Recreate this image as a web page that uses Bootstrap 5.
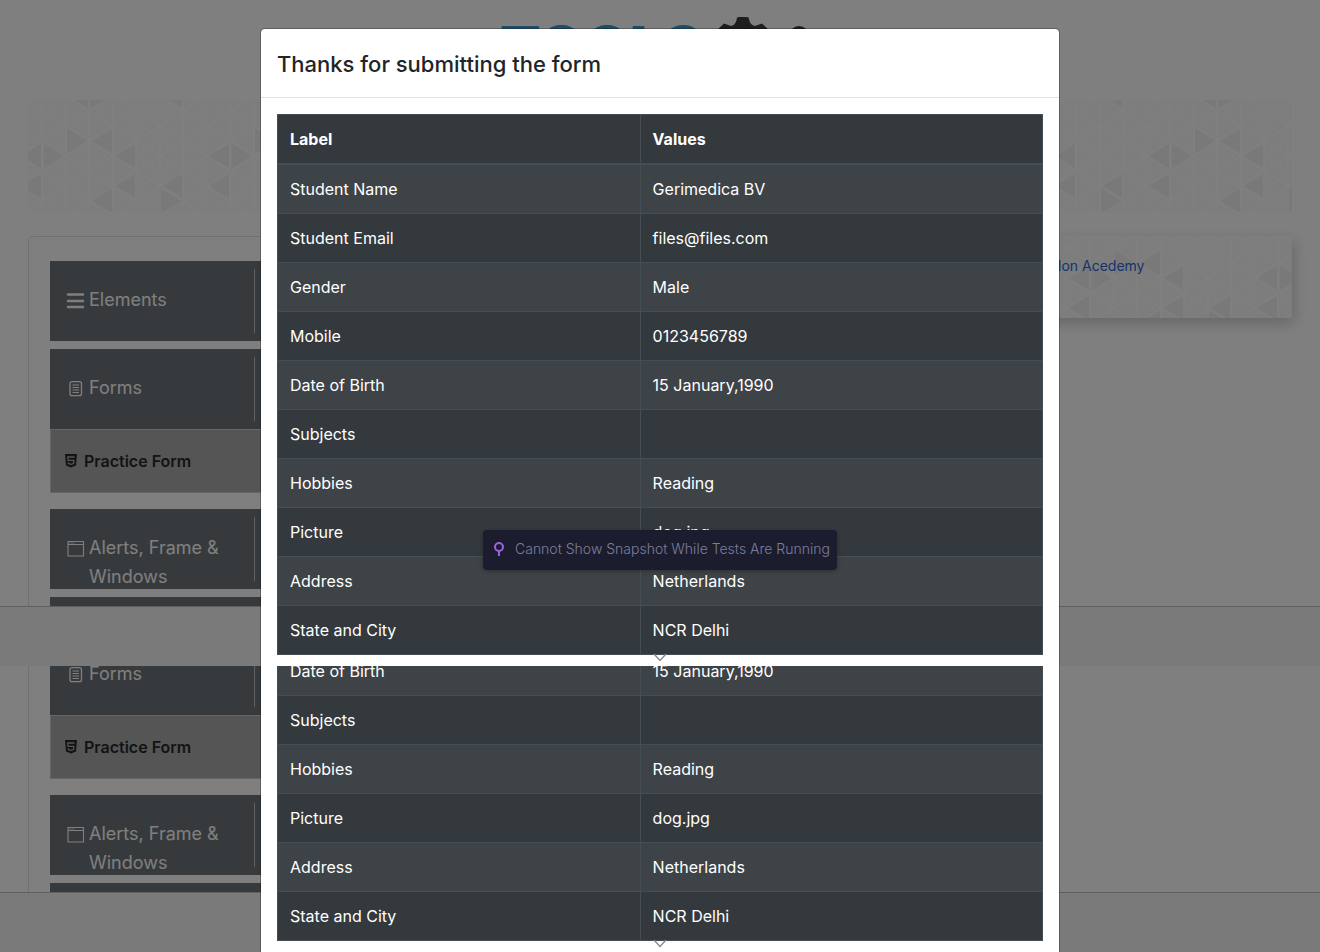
<!DOCTYPE html>
<html lang="en">
<head>
<meta charset="utf-8">
<meta name="viewport" content="width=device-width, initial-scale=1">
<title>Practice Form</title>
<link href="https://cdn.jsdelivr.net/npm/bootstrap@5.3.0/dist/css/bootstrap.min.css" rel="stylesheet">
<style>
body{font-family:Inter,"Liberation Sans",sans-serif;font-size:16px;line-height:24px;color:#212529}
.snap{position:relative;overflow:hidden}
.dim{position:absolute;inset:0;background:rgba(0,0,0,.5)}
.layer{position:absolute;inset:0;overflow:hidden}
.site-logo{height:100px}
.hero{height:112px;margin-bottom:24px;border-radius:2px;overflow:hidden}
.pad-x{padding-left:28px;padding-right:28px}
.side{width:316px;border:1px solid #e0e0e0;border-bottom:0;border-radius:5px 5px 0 0;padding:24px 21px 0}
.group{height:80px;background:#6e7478;color:#fff;margin-bottom:8px}
.group.cut{height:9px;margin:0;overflow:hidden}
.group-label{width:205px;margin:8px 0;padding:16px 0 0 16px;border-right:1px solid #c0c0c0;font-size:18px;line-height:29px;gap:4px}
.group-label svg{flex:none;width:19px;height:19px;margin-top:6px}
.sub{height:64px;margin:-8px 0 16px;background:#aaa;border:1px solid #c8ccd0;border-width:1px 0 1px 1px;padding-left:14px;gap:7px;font-weight:600;font-size:16px;color:#25282b;text-decoration:none}
.ad{width:282px;height:82px;box-shadow:2px 5px 14px rgba(0,0,0,.2);overflow:hidden;position:relative}
.ad a{position:absolute;top:18px;left:48px;font-size:14px;text-decoration:none;color:#2b6ad8}
.foot{height:60px;background:#f5f5f5;border-top:1px solid #c0c0c0}
.sheet{max-width:800px;min-height:100%;margin:28px auto 0;background:#fff;background-clip:padding-box;border:1px solid rgba(0,0,0,.25);border-radius:5px}
.sheet-head{padding:17px 16px 15px;border-bottom:1px solid #dee2e6}
.sheet-head h1{font-size:22px;line-height:36px;font-weight:500;margin:0}
.sheet-body{padding:16px}
.result{width:100%;border-collapse:collapse;background:#34393d;color:#fff;table-layout:fixed}
.result th,.result td{border:1px solid #454d55;padding:12px;height:49px}
.result thead th{border-bottom-width:2px;font-weight:700}
.result tbody tr.alt{background:#3e4347}
.result col:first-child{width:47.4%}
.chev{position:absolute;top:100%;margin-top:-2px;width:14px;height:9px}
.note{position:absolute;top:530px;height:40px;width:354px;background:#1b1d2e;color:#7b7e9c;border-radius:4px;font-size:14px;font-weight:300;padding:0 0 2px 10px;gap:10px;box-shadow:0 1px 4px rgba(0,0,0,.3)}
.rest .side{margin-top:-31px;border-top:0;border-radius:0;padding-top:0}
.rest .sheet{margin-top:-21px;border-radius:0}
.rest .sheet-body{padding-top:0}
</style>
</head>
<body class="min-vh-100 d-flex flex-column overflow-x-hidden">
<svg width="0" height="0" class="position-absolute" aria-hidden="true">
<defs>
<pattern id="tri" width="188" height="120" patternUnits="userSpaceOnUse" x="-9" y="-4">
<rect width="188" height="120" fill="#fafafa"/>
<g fill="#f2f2f2">
<path d="M2 60L22 48V72ZM25 48L45 60L25 72ZM48 32L68 45L48 57ZM73 45L93 33V57ZM97 60L117 48V72ZM2 90L22 78V102ZM97 90L117 78V102ZM144 90L164 78V102ZM142 93L162 105L142 117ZM73 105L93 93V117ZM49 0L69 12V-12ZM91 0L71 12V-12ZM144 0L164 12V-12Z"/>
</g>
<path d="M23 0V120M47 0V120M70 0V120M94 0V120M117 0V120M141 0V120M164 0V120M188 0V120M0 0L188 120M0 30L141 120M0 60L94 120M0 90L47 120M47 0L188 90M94 0L188 60M141 0L188 30M188 0L0 120M141 0L0 90M94 0L0 60M47 0L0 30M188 30L47 120M188 60L94 120M188 90L141 120" fill="none" stroke="#fff" stroke-width="2"/>
</pattern>
<symbol id="i-bars" viewBox="0 0 19 19"><path d="M2 3.5H17M2 10H17M2 16H17" stroke="#fff" stroke-width="2.500" stroke-linecap="round"/></symbol>
<symbol id="i-form" viewBox="0 0 19 19"><rect x="4" y="2.7" width="11.5" height="14" rx="2" fill="none" stroke="#fff" stroke-width="1.3"/><path d="M6.5 6H13M6.5 8.5H13M6.5 11H13M6.5 13.5H13" stroke="#fff"/></symbol>
<symbol id="i-win" viewBox="0 0 19 19"><path d="M2 2.5H17.500V17H2ZM2 5.5H17.500" fill="none" stroke="#fff" stroke-width="1.1"/><path d="M3.500 4H8.500" stroke="#fff" stroke-dasharray="1 1"/></symbol>
<symbol id="i-html" viewBox="0 0 12 14"><path d="M0 0H12L11 11.500L6 13.500L1 11.500Z" fill="#25282b"/><path d="M9.500 3H2.800L3.100 6.300H8.800L8.500 9.500L6 10.300L3.500 9.500L3.400 8.300" fill="none" stroke="#aaa" stroke-width="1.300"/></symbol>
</defs>
</svg>

<section class="snap">
  <div class="site-logo text-center">
    <svg width="320" height="76" viewBox="0 0 320 76" role="img" aria-label="TOOLS QA">
      <text x="0" y="69" font-family="Inter,sans-serif" font-weight="900" font-size="59" fill="#3e9ad0">TOOLS</text>
      <path d="M216 31L224 23.500L231 26Q236 25 237 18Q237 17 239 17H247Q249 17 249 19Q250 25 255 26L262 23.500L270 31V60H216Z" fill="#3c3c3c"/>
      <circle cx="299" cy="36" r="10" fill="#3c3c3c"/>
    </svg>
  </div>
  <div class="pad-x">
    <div class="hero"><svg width="100%" height="112"><rect width="100%" height="112" fill="url(#tri)"/></svg></div>
    <div class="d-flex justify-content-between">
      <nav class="side">
        <div class="group d-flex"><div class="group-label d-flex"><svg><use href="#i-bars"/></svg>Elements</div></div>
        <div class="group d-flex"><div class="group-label d-flex"><svg><use href="#i-form"/></svg>Forms</div></div>
        <a href="#" class="sub d-flex align-items-center"><svg width="12" height="14"><use href="#i-html"/></svg>Practice Form</a>
        <div class="group d-flex"><div class="group-label d-flex"><svg><use href="#i-win"/></svg><span>Alerts, Frame &amp; Windows</span></div></div>
        <div class="group cut"></div>
      </nav>
      <aside class="ad"><svg width="282" height="82"><g transform="translate(66 -14)"><rect x="-70" width="300" height="110" fill="url(#tri)"/></g></svg><a href="#">lon Acedemy</a></aside>
    </div>
  </div>
  <footer class="foot"></footer>
  <div class="dim"></div>
  <div class="layer">
    <div class="sheet">
      <div class="sheet-head"><h1>Thanks for submitting the form</h1></div>
      <div class="sheet-body"><div class="position-relative">
        <table class="result">
          <colgroup><col><col></colgroup>
          <thead><tr><th>Label</th><th>Values</th></tr></thead>
          <tbody>
            <tr class="alt"><td>Student Name</td><td>Gerimedica BV</td></tr>
            <tr><td>Student Email</td><td>files@files.com</td></tr>
            <tr class="alt"><td>Gender</td><td>Male</td></tr>
            <tr><td>Mobile</td><td>0123456789</td></tr>
            <tr class="alt"><td>Date of Birth</td><td>15 January,1990</td></tr>
            <tr><td>Subjects</td><td></td></tr>
            <tr class="alt"><td>Hobbies</td><td>Reading</td></tr>
            <tr><td>Picture</td><td>dog.jpg</td></tr>
            <tr class="alt"><td>Address</td><td>Netherlands</td></tr>
            <tr><td>State and City</td><td>NCR Delhi</td></tr>
          </tbody>
        </table>
        <svg class="chev start-50 translate-middle-x" viewBox="0 0 14 9"><path d="M1 1L7 7.500L13 1" fill="none" stroke="#888" stroke-width="1.300"/></svg>
      </div></div>
    </div>
  </div>
  <div class="note start-50 translate-middle-x d-flex align-items-center" role="status">
    <svg width="12" height="16" viewBox="0 0 12 16"><circle cx="6" cy="6" r="4" fill="none" stroke="#9a62e0" stroke-width="2"/><path d="M6 10V15" stroke="#9a62e0" stroke-width="2"/></svg>
    <span class="text-nowrap">Cannot Show Snapshot While Tests Are Running</span>
  </div>
</section>

<section class="snap rest flex-grow-1">
  <div class="pad-x">
    <nav class="side">
      <div class="group d-flex"><div class="group-label d-flex"><svg><use href="#i-form"/></svg>Forms</div></div>
      <a href="#" class="sub d-flex align-items-center"><svg width="12" height="14"><use href="#i-html"/></svg>Practice Form</a>
      <div class="group d-flex"><div class="group-label d-flex"><svg><use href="#i-win"/></svg><span>Alerts, Frame &amp; Windows</span></div></div>
      <div class="group cut"></div>
    </nav>
  </div>
  <footer class="foot"></footer>
  <div class="dim"></div>
  <div class="layer">
    <div class="sheet">
      <div class="sheet-body"><div class="position-relative">
        <table class="result">
          <colgroup><col><col></colgroup>
          <tbody>
            <tr class="alt"><td>Date of Birth</td><td>15 January,1990</td></tr>
            <tr><td>Subjects</td><td></td></tr>
            <tr class="alt"><td>Hobbies</td><td>Reading</td></tr>
            <tr><td>Picture</td><td>dog.jpg</td></tr>
            <tr class="alt"><td>Address</td><td>Netherlands</td></tr>
            <tr><td>State and City</td><td>NCR Delhi</td></tr>
          </tbody>
        </table>
        <svg class="chev start-50 translate-middle-x" viewBox="0 0 14 9"><path d="M1 1L7 7.500L13 1" fill="none" stroke="#888" stroke-width="1.300"/></svg>
      </div></div>
    </div>
  </div>
</section>
<script src="https://cdn.jsdelivr.net/npm/bootstrap@5.3.0/dist/js/bootstrap.bundle.min.js"></script>
</body>
</html>
